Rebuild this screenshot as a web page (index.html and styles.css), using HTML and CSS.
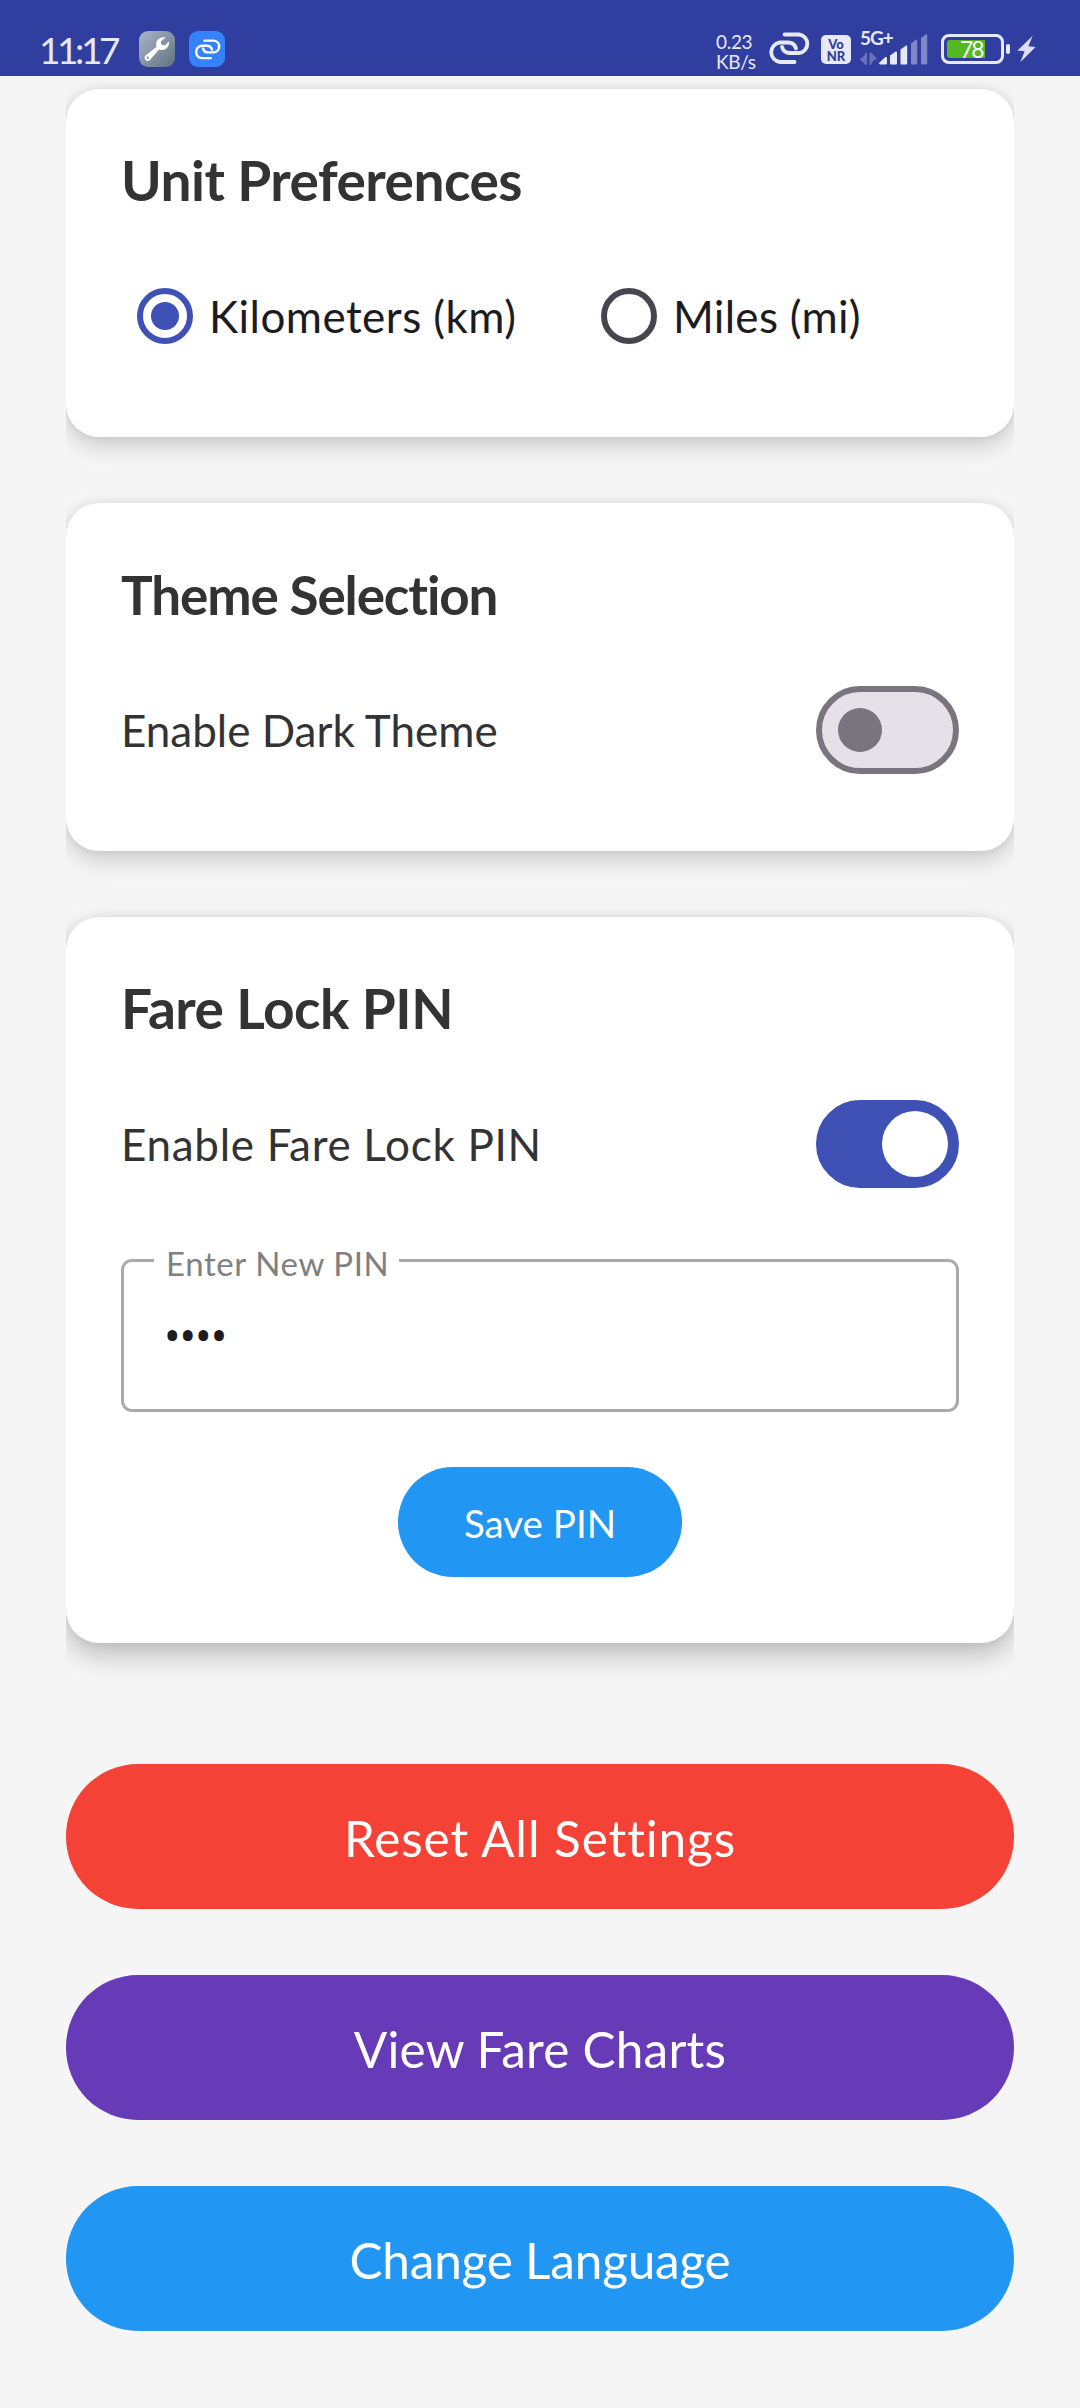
FILE: index.html
```html
<!DOCTYPE html>
<html lang="en">
<head>
<meta charset="utf-8">
<title>Settings</title>
<link rel="stylesheet" href="styles.css">
</head>
<body>
<header class="status">
  <div class="status-left">
    <span class="clock">11:17</span>
    <span class="app-icon tool">
      <svg viewBox="0 0 36 36" width="36" height="36">
        <defs><mask id="hole"><rect width="36" height="36" fill="#fff"/><circle cx="8.8" cy="26.8" r="1.2" fill="#000"/></mask></defs>
        <path mask="url(#hole)" d="M26.6 6.6c-3.600-1-7.600.8-9 4.200-.7 1.700-.6 3.400 0 5L6.600 24.600a3 3 0 0 0 4.300 4.300L20 18.400c4 1.800 9-.4 10-5.400.2-1 0-1.600-.2-2.400l-3.200 3.200c-1.600 1-3.600.6-4.400-1-.6-1.200-.3-2.400.6-3.400z" fill="#fff"/>
      </svg>
    </span>
    <span class="app-icon link">
      <svg viewBox="0 0 42 33" width="27" height="21" fill="none" stroke="#fff" stroke-width="3.800" stroke-linecap="round"><path d="M16 2.500H31a9.300 9.300 0 0 1 0 18.500H22c-4 0-7-2.500-8-6"/><path d="M26 30H12a9.800 9.800 0 0 1 0-19.500h8c4 0 7 2.500 8 6"/></svg>
    </span>
  </div>
  <div class="status-right">
    <span class="speed"><span>0.23</span><span>KB/s</span></span>
    <svg class="chain" viewBox="0 0 42 33" width="42" height="33" fill="none" stroke="#e8e9f8" stroke-width="3.800" stroke-linecap="round"><path d="M16.500 2.500H31a9.300 9.300 0 0 1 0 18.500H22c-4 0-7-2.500-8-6"/><path d="M26.500 30H12a9.800 9.800 0 0 1 0-19.500h8c4 0 7 2.500 8 6"/></svg>
    <span class="vonr"><span>Vo</span><span>NR</span></span>
    <span class="signal">
      <span class="net">5G+</span>
      <svg viewBox="0 0 68 34" width="68" height="34">
        <g fill="#e8e9f8">
          <path d="M20.500 33.500c-1.500 0-2-1-1-2L25 26.300c1-.8 2-.3 2 .8V32c0 1-.6 1.500-1.500 1.500z"/>
          <path d="M30 24.500l5-3.600c1-.6 2-.2 2 .9V32c0 1-.6 1.500-1.500 1.500h-4c-1 0-1.500-.5-1.500-1.500z"/>
          <path d="M40.500 18.500l5-3.600c1-.6 1.700-.2 1.700.9V32c0 1-.6 1.500-1.500 1.500h-3.700c-1 0-1.500-.5-1.500-1.500z"/>
        </g>
        <g fill="#8086c8">
          <path d="M51 12.500l4.500-3.400c1-.6 1.700-.2 1.700.9V32c0 1-.6 1.500-1.500 1.500h-3.200c-1 0-1.500-.5-1.500-1.500z"/>
          <path d="M61 7l4.500-3.400c1-.6 1.700-.2 1.700.9V32c0 1-.6 1.500-1.500 1.500h-3.200c-1 0-1.500-.5-1.500-1.500z"/>
        </g>
        <path d="M6 22.500V33L1 28M10.500 33V22.500L15.500 27.500" fill="#6a71bb" stroke="#6a71bb" stroke-width="2" stroke-linejoin="round" stroke-linecap="round"/>
      </svg>
    </span>
    <span class="battery"><span class="charge">78</span></span>
    <span class="nub"></span>
    <svg class="bolt" viewBox="0 0 20 28" width="20" height="28"><path d="M16.500 0L.5 15.500l7.500.8L3.500 28 19.500 12l-7.500-.8z" fill="#dcdef4"/></svg>
  </div>
</header>

<main class="content">
  <section class="card">
    <h2 class="title unit">Unit Preferences</h2>
    <div class="row units">
      <div class="option"><span class="radio on"></span><span class="label km">Kilometers (km)</span></div>
      <div class="option second"><span class="radio"></span><span class="label mi">Miles (mi)</span></div>
    </div>
  </section>

  <section class="card">
    <h2 class="title theme">Theme Selection</h2>
    <div class="row">
      <span class="label dark">Enable Dark Theme</span>
      <span class="switch"><span class="thumb"></span></span>
    </div>
  </section>

  <section class="card raised">
    <h2 class="title lock">Fare Lock PIN</h2>
    <div class="row">
      <span class="label fare">Enable Fare Lock PIN</span>
      <span class="switch on"><span class="thumb"></span></span>
    </div>
    <div class="field">
      <span class="field-label">Enter New PIN</span>
      <span class="dots">••••</span>
    </div>
    <div class="save">Save PIN</div>
  </section>

  <nav class="actions">
    <div class="action reset">Reset All Settings</div>
    <div class="action charts">View Fare Charts</div>
    <div class="action language">Change Language</div>
  </nav>
</main>
</body>
</html>
```
FILE: styles.css
```css
* { box-sizing: border-box; }
body {
  margin: 0;
  width: 1080px;
  height: 2408px;
  overflow: hidden;
  background: #f5f5f5;
  font-family: Lato, "Open Sans", sans-serif;
  font-variant-ligatures: none;
}

/* Status bar */
.status {
  display: flex;
  justify-content: space-between;
  height: 76px;
  padding: 31px 44px 0 39px;
  background: #303e9f;
  color: #e8e9f8;
}
.status-left, .status-right { display: flex; align-items: flex-start; height: 36px; }
.clock { width: 100px; font-size: 37px; line-height: 38px; letter-spacing: -3.400px; }
.app-icon { display: flex; align-items: center; justify-content: center; width: 36px; height: 36px; border-radius: 9px; }
.tool { margin-right: 14px; background: linear-gradient(135deg, #a9b5c9, #62727f); }
.link { background: #3582fd; }
.speed { display: flex; flex-direction: column; width: 52px; margin-top: -1px; }
.speed span { font-size: 19px; line-height: 23px; letter-spacing: -.3px; }
.speed span + span { margin-top: -3px; }
.chain { margin-top: 1px; }
.vonr {
  display: flex;
  flex-direction: column;
  align-items: center;
  justify-content: center;
  width: 30px;
  height: 29px;
  margin: 4px 9px 0 11px;
  border-radius: 5px;
  background: #e8e9f8;
  color: #303e9f;
  font-size: 13px;
  font-weight: 900;
  line-height: 12px;
}
.signal { position: relative; width: 68px; margin-right: 13px; }
.signal svg { display: block; }
.net { position: absolute; left: 0; top: -4px; font-size: 19px; line-height: 22px; letter-spacing: -1px; font-weight: 700; }
.battery { width: 63px; height: 30px; margin-top: 3px; padding: 3px; border: 3px solid #e8e9f8; border-radius: 8px; }
.charge {
  display: block;
  width: 38px;
  height: 18px;
  padding-left: 13px;
  border-radius: 3px 0 0 3px;
  background: #55b721;
  color: #fff;
  font-size: 23px;
  line-height: 19px;
  letter-spacing: -2px;
}
.nub { width: 4px; height: 10px; margin: 13px 7px 0 2px; border-radius: 2px; background: #e8e9f8; }
.bolt { margin-top: 4px; width: 19px; }

/* Cards; elevation shadows are cut at the column's side edges */
.content { display: flex; flex-direction: column; width: 948px; margin: 0 auto; padding-top: 13px; overflow-x: clip; }
.card {
  margin-bottom: 66px;
  padding: 55px 55px;
  border-radius: 33px;
  background: #fff;
  box-shadow: 0 9px 22px rgba(0, 0, 0, .17), 0 0 10px rgba(0, 0, 0, .07);
}
.raised { margin-bottom: 121px; padding-bottom: 66px; box-shadow: 0 12px 26px rgba(0, 0, 0, .23), 0 0 10px rgba(0, 0, 0, .07); }
.title { margin: 0 0 33px; color: #333; font-size: 55px; font-weight: 700; line-height: 73px; white-space: nowrap; }
.unit { letter-spacing: -.5px; }
.theme { font-size: 53px; line-height: 73px; letter-spacing: -1.100px; }
.lock { letter-spacing: -.5px; }
.row { display: flex; align-items: center; justify-content: space-between; height: 132px; }
.units { justify-content: flex-start; padding-left: 16px; }
.option { display: flex; align-items: center; width: 464px; }
.second { width: auto; }
.radio { width: 56px; height: 56px; margin-right: 16px; border: 6px solid #49454f; border-radius: 50%; }
.radio.on { border-color: #3f51b5; background: radial-gradient(circle, #3f51b5 13.500px, transparent 14.500px); }
.label { color: #333; font-size: 44px; line-height: 58px; white-space: nowrap; }
.option .label { color: #1c1b1f; }
.km { letter-spacing: .45px; }
.mi { letter-spacing: .3px; }
.dark { letter-spacing: 0; }
.fare { letter-spacing: .7px; }

.switch { display: flex; align-items: center; width: 143px; height: 88px; padding-left: 16px; border: 6px solid #79747e; border-radius: 44px; background: #e6e0e9; }
.thumb { width: 44px; height: 44px; border-radius: 50%; background: #79747e; }
.switch.on { padding-left: 60px; border-color: #3f51b5; background: #3f51b5; }
.switch.on .thumb { width: 66px; height: 66px; background: #fff; }

.field { position: relative; height: 153px; margin: 49px 0 55px; padding: 44px 40px; border: 3px solid #aaa; border-radius: 11px; }
.field-label {
  position: absolute;
  left: 30px;
  top: -21px;
  width: 245px;
  padding-left: 12px;
  background: #fff;
  color: #808080;
  font-size: 33px;
  line-height: 44px;
  letter-spacing: .6px;
}
.dots { display: block; color: #1c1b1f; font-family: "Noto Sans", sans-serif; font-size: 44px; line-height: 58px; letter-spacing: -1px; }
.save {
  width: 284px;
  height: 110px;
  margin: 0 auto;
  border-radius: 55px;
  background: #2196f3;
  color: #fff;
  font-size: 38.500px;
  line-height: 112px;
  text-align: center;
}

/* Full-width actions */
.actions { display: grid; gap: 66px; }
.action { height: 145px; border-radius: 72px; color: #fff; font-size: 49.500px; line-height: 148px; text-align: center; }
.reset { background: #f44336; letter-spacing: .9px; }
.charts { background: #673ab7; letter-spacing: .2px; }
.language { background: #2196f3; letter-spacing: -.2px; }
```
